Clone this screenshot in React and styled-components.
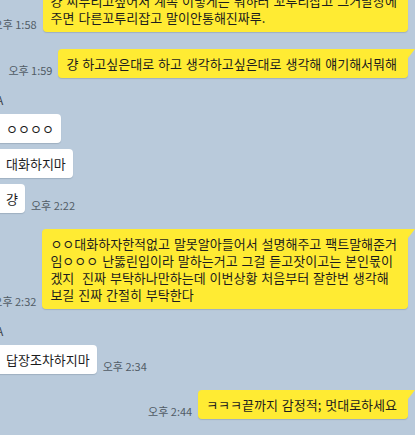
import React from 'react';
import styled, { createGlobalStyle, css } from 'styled-components';

const Global = createGlobalStyle`
  html, body {
    margin: 0;
    padding: 0;
    background: #b9cadb;
    overflow: hidden;
  }
  body {
    font-family: "Noto Sans CJK KR", "Noto Sans", sans-serif;
  }
`;

const Chat = styled.div`
  width: 415px;
  height: 435px;
  overflow: hidden;
  background: #b9cadb;
  box-sizing: border-box;
  padding-right: 7px;
`;

const Feed = styled.div`
  display: flex;
  flex-direction: column;
  margin-top: -14px;
`;

const MineRow = styled.div`
  display: flex;
  justify-content: flex-end;
  align-items: flex-end;
  gap: 6px;
  margin-top: ${(p) => p.$gap || 0}px;
`;

const OtherGroup = styled.div`
  display: flex;
  flex-direction: column;
  align-items: flex-start;
  gap: 6px;
  margin-left: -4px;
  margin-top: 14px;
`;

const OtherRow = styled.div`
  display: flex;
  align-items: flex-end;
  gap: 6px;
`;

const Name = styled.div`
  font-size: 12px;
  line-height: 16px;
  color: #3d454d;
`;

const Bubble = styled.div`
  position: relative;
  flex-shrink: 0;
  font-size: 13px;
  line-height: 17px;
  color: #1d1d1d;
  border-radius: 4px;
  white-space: pre;
  word-spacing: 1px;
  box-shadow: 0 1px 1px rgba(40, 60, 80, 0.18);
  ${(p) =>
    p.$mine
      ? css`
          background: #ffeb33;
          padding: 6px 11px 6px 8px;
          border-top-right-radius: 0;
          &::after {
            content: '';
            position: absolute;
            top: 0;
            right: -7px;
            width: 0;
            height: 0;
            border-top: 9px solid #ffeb33;
            border-right: 7px solid transparent;
          }
        `
      : css`
          background: #ffffff;
          padding: 6px 7px 6px 10px;
        `}
`;

const Time = styled.span`
  flex-shrink: 0;
  font-size: 11px;
  line-height: 14px;
  color: #515c66;
  white-space: nowrap;
  margin-bottom: 1px;
`;

const Mine = ({ text, time, gap }) => (
  <MineRow $gap={gap}>
    {time && <Time>{time}</Time>}
    <Bubble $mine>{text}</Bubble>
  </MineRow>
);

const Others = ({ name, messages, time }) => (
  <OtherGroup>
    <Name>{name}</Name>
    {messages.map((m, i) => (
      <OtherRow key={i}>
        <Bubble>{m}</Bubble>
        {i === messages.length - 1 && time && <Time>{time}</Time>}
      </OtherRow>
    ))}
  </OtherGroup>
);

export default function App() {
  return (
    <>
      <Global />
      <Chat>
        <Feed>
          <Mine
            time="오후 1:58"
            text={'걍 씨부리고싶어서 계속 이렇게는 뭐하러 꼬투리잡고 그거말장에\n주면 다른꼬투리잡고 말이안통해진짜루.'}
          />
          <Mine
            gap={17}
            time="오후 1:59"
            text="걍 하고싶은대로 하고 생각하고싶은대로 생각해 얘기해서뭐해"
          />
          <Others name="A" messages={['ㅇㅇㅇㅇ', '대화하지마', '걍']} time="오후 2:22" />
          <Mine
            gap={16}
            time="오후 2:32"
            text={
              'ㅇㅇ대화하자한적없고 말못알아들어서 설명해주고 팩트말해준거\n' +
              '임ㅇㅇㅇ 난뚫린입이라 말하는거고 그걸 듣고잣이고는 본인몫이\n' +
              '겠지  진짜 부탁하나만하는데 이번상황 처음부터 잘한번 생각해\n' +
              '보길 진짜 간절히 부탁한다'
            }
          />
          <Others name="A" messages={['답장조차하지마']} time="오후 2:34" />
          <Mine gap={16} time="오후 2:44" text="ㅋㅋㅋ끝까지 감정적; 멋대로하세요" />
        </Feed>
      </Chat>
    </>
  );
}
